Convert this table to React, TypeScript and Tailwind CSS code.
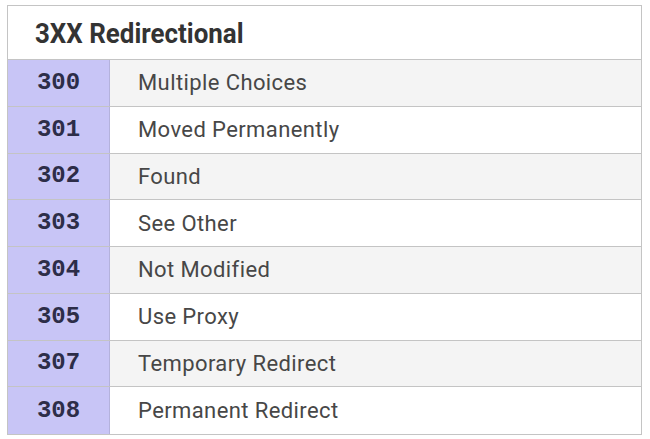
const rows = [
  { code: '300', label: 'Multiple Choices' },
  { code: '301', label: 'Moved Permanently' },
  { code: '302', label: 'Found' },
  { code: '303', label: 'See Other' },
  { code: '304', label: 'Not Modified' },
  { code: '305', label: 'Use Proxy' },
  { code: '307', label: 'Temporary Redirect' },
  { code: '308', label: 'Permanent Redirect' },
]

export default function App() {
  return (
    <div className="w-[650px] h-[439px] bg-white pt-[5px] pl-[7px]">
      <div className="w-[635px] border border-[#c4c4c4] bg-white">
        {/* Header */}
        <div className="h-[54px] flex items-center border-b border-[#c4c4c4] pl-[27px] pt-[3px]">
          <span
            className="inline-block origin-left scale-x-[0.96] text-[27px] font-bold text-[#333333]"
            style={{ fontFamily: 'Roboto, "Liberation Sans", sans-serif' }}
          >
            3XX Redirectional
          </span>
        </div>

        {/* Rows */}
        {rows.map((r, i) => (
          <div
            key={r.code}
            className={`flex h-[46.75px] ${i < rows.length - 1 ? 'border-b border-[#c4c4c4]' : ''} ${
              i % 2 === 0 ? 'bg-[#f4f4f4]' : 'bg-white'
            }`}
          >
            <div
              className="w-[102px] shrink-0 flex items-center justify-center bg-[#c8c5f6] border-r border-[#b4b2dc] text-[24px] font-bold text-[#2d2d48]"
              style={{ fontFamily: '"Liberation Mono", monospace' }}
            >
              {r.code}
            </div>
            <div
              className="flex items-center pl-[28px] text-[22px] tracking-[0.4px] text-[#474747]"
              style={{ fontFamily: 'Roboto, "Liberation Sans", sans-serif' }}
            >
              {r.label}
            </div>
          </div>
        ))}
      </div>
    </div>
  )
}
